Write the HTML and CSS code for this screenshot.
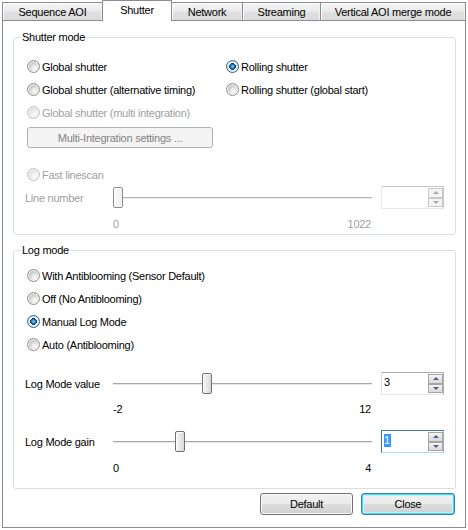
FILE: index.html
```html
<!DOCTYPE html>
<html>
<head>
<meta charset="utf-8">
<link rel="stylesheet" href="styles.css">
</head>
<body>
<div class="tabs">
  <div class="tab t1">Sequence AOI</div>
  <div class="tab sel t2">Shutter</div>
  <div class="tab t3">Network</div>
  <div class="tab t4">Streaming</div>
  <div class="tab t5">Vertical AOI merge mode</div>
</div>
<div class="panel">
  <fieldset class="group g1">
    <legend>Shutter mode</legend>
    <div class="opts">
      <div class="col col-left">
        <div class="opt"><span class="radio"></span>Global shutter</div>
        <div class="opt"><span class="radio"></span>Global shutter (alternative timing)</div>
        <div class="opt disabled"><span class="radio"></span>Global shutter (multi integration)</div>
      </div>
      <div class="col">
        <div class="opt"><span class="radio checked"></span>Rolling shutter</div>
        <div class="opt"><span class="radio"></span>Rolling shutter (global start)</div>
      </div>
    </div>
    <div class="btn-disabled">Multi-Integration settings ...</div>
    <div class="opt disabled linescan"><span class="radio"></span>Fast linescan</div>
    <div class="srow disabled">
      <div class="slabel">Line number</div>
      <div class="slider"><span class="thumb" style="left:0px"></span></div>
      <div class="spin">
        <div class="spin-val"></div>
        <div class="spin-btns"><span class="spin-btn up"></span><span class="spin-btn down"></span></div>
      </div>
    </div>
    <div class="scale disabled s1"><span>0</span><span>1022</span></div>
  </fieldset>

  <fieldset class="group g2">
    <legend>Log mode</legend>
    <div class="opts">
      <div class="col">
        <div class="opt"><span class="radio"></span>With Antiblooming (Sensor Default)</div>
        <div class="opt"><span class="radio"></span>Off (No Antiblooming)</div>
        <div class="opt"><span class="radio checked"></span>Manual Log Mode</div>
        <div class="opt"><span class="radio"></span>Auto (Antiblooming)</div>
      </div>
    </div>
    <div class="srow r1">
      <div class="slabel">Log Mode value</div>
      <div class="slider"><span class="thumb" style="left:89px"></span></div>
      <div class="spin">
        <div class="spin-val">3</div>
        <div class="spin-btns"><span class="spin-btn up"></span><span class="spin-btn down"></span></div>
      </div>
    </div>
    <div class="scale s2"><span>-2</span><span>12</span></div>
    <div class="srow r2">
      <div class="slabel">Log Mode gain</div>
      <div class="slider"><span class="thumb" style="left:62px"></span></div>
      <div class="spin focus">
        <div class="spin-val"><span class="seltext">1</span></div>
        <div class="spin-btns"><span class="spin-btn up"></span><span class="spin-btn down"></span></div>
      </div>
    </div>
    <div class="scale s3"><span>0</span><span>4</span></div>
  </fieldset>

  <div class="actions">
    <div class="pbtn default">Default</div>
    <div class="pbtn close">Close</div>
  </div>
</div>
</body>
</html>
```
FILE: styles.css
```css
html, body {
  margin: 0;
  padding: 0;
}
body {
  width: 468px;
  height: 530px;
  overflow: hidden;
  background: #fff;
  font-family: "Liberation Sans", Arial, sans-serif;
  font-size: 11px;
  letter-spacing: -0.25px;
  color: #000;
}

/* Tabs */
.tabs {
  display: flex;
  align-items: flex-end;
  height: 20px;
  padding-left: 2px;
}
.tab {
  box-sizing: border-box;
  height: 18px;
  margin-left: -1px;
  padding-top: 1px;
  border: 1px solid #898c95;
  border-bottom: none;
  background: linear-gradient(#f4f4f4, #ececec 45%, #e0e0e0 55%, #dadada);
  box-shadow: inset 1px 1px 0 #fcfcfc, inset -1px 0 0 #f0f0f0;
  display: flex;
  align-items: center;
  justify-content: center;
  white-space: nowrap;
}
.tab.t1 { margin-left: 0; width: 101px; }
.tab.t2 { width: 70px; }
.tab.t3 { width: 72px; }
.tab.t4 { width: 79px; }
.tab.t5 { width: 146px; }
.tab.sel {
  height: 21px;
  margin-bottom: -1px;
  padding-top: 0;
  padding-bottom: 2px;
  background: #fff;
  box-shadow: none;
  position: relative;
  z-index: 1;
}

/* Panel */
.panel {
  box-sizing: border-box;
  width: 464px;
  height: 508px;
  margin-left: 2px;
  border: 1px solid #898c95;
  display: flex;
  flex-direction: column;
}

/* Group boxes */
.group {
  margin: 10px 9px 0 10px;
  padding: 0 0 2px 11px;
  border: 1px solid #d5dfe5;
  border-radius: 3px;
  min-width: 0;
}
.group legend {
  margin-left: -5px;
  padding: 0 2px;
  line-height: 13px;
}
.g1 { margin-top: 10px; padding-bottom: 2px; }
.g2 { margin-top: 9px; padding-bottom: 12px; }

.opts {
  display: flex;
  margin-left: 2px;
}
.g1 .opts { margin-top: 11px; }
.g2 .opts { margin-top: 7px; }
.col-left { width: 199px; }

.opt {
  display: flex;
  align-items: center;
  height: 23px;
  white-space: nowrap;
}
.radio {
  box-sizing: border-box;
  width: 13px;
  height: 13px;
  margin-right: 2px;
  flex: none;
  border-radius: 50%;
  border: 1px solid #8e8f8f;
  background: radial-gradient(circle at 62% 66%, #fbfbfb 0, #ebebeb 2.5px, #cfcfcf 5px, #c8c8c8 5.5px);
  box-shadow: inset 0 0 0 1px #f6f6f6;
}
.radio.checked {
  border-color: #2c628b;
  background: radial-gradient(circle at 50% 50%, #9be0fb 0, #3e9ad9 1.2px, #1b5b96 2.6px, #0f3a67 3.4px, #eef3f6 3.6px, #dfe6ea 5.5px);
  box-shadow: none;
}
.disabled { color: #a0a0a0; }
.disabled .radio {
  border-color: #c0c1c3;
  background: radial-gradient(circle at 62% 66%, #fbfbfb 0, #f1f1f1 3px, #e2e2e2 5.5px);
}

.btn-disabled {
  box-sizing: border-box;
  width: 186px;
  height: 21px;
  margin: 3px 0 0 2px;
  border: 1px solid #adb2b5;
  border-radius: 3px;
  background: #f4f4f4;
  color: #838383;
  display: flex;
  align-items: center;
  justify-content: center;
}
.linescan { margin: 15px 0 0 2px; }

/* Slider rows */
.srow {
  display: flex;
  align-items: center;
  height: 23px;
}
.g2 .srow.r1 { margin-top: 16px; }
.g2 .srow.r2 { margin-top: 13px; }
.slabel {
  width: 88px;
  white-space: nowrap;
}
.slider {
  position: relative;
  width: 259px;
  height: 23px;
  background: linear-gradient(#a9a9a9 0 1px, #e4e7e8 1px 2px) no-repeat 0 11px / 100% 2px;
}
.thumb {
  position: absolute;
  top: 1px;
  box-sizing: border-box;
  width: 10px;
  height: 21px;
  border: 1px solid #707070;
  border-radius: 2px;
  background: linear-gradient(90deg, #f6f6f6, #e6e6e6 60%, #d8d8d8);
  box-shadow: inset 1px 1px 0 #fff;
}
.srow.disabled .thumb {
  border-color: #8e8e8e;
  background: linear-gradient(90deg, #fafafa, #efefef);
}
.srow.disabled .slider {
  background: linear-gradient(#b4b4b4 0 1px, #e8ebec 1px 2px) no-repeat 0 11px / 100% 2px;
}

.spin {
  box-sizing: border-box;
  width: 63px;
  height: 23px;
  margin-left: 9px;
  padding: 1px 0 1px 1px;
  border: 1px solid;
  border-color: #abadb3 #abadb3 #e3e9ef #e2e3ea;
  background: #fff;
  display: flex;
}
.spin-val {
  flex: 1;
  padding: 1px 0 0 1px;
  line-height: 14px;
}
.spin-btns {
  width: 15px;
  display: flex;
  flex-direction: column;
}
.spin-btn {
  box-sizing: border-box;
  flex: 1;
  border: 1px solid #a5a5a5;
  background: linear-gradient(#f5f5f5, #e6e6e6 50%, #d9d9d9);
  display: flex;
  align-items: center;
  justify-content: center;
}
.spin-btn::after {
  content: "";
  width: 0;
  height: 0;
  border-left: 3px solid transparent;
  border-right: 3px solid transparent;
}
.spin-btn.up::after { border-bottom: 3px solid #4d5e8f; }
.spin-btn.down::after { border-top: 3px solid #4d5e8f; }
.srow.disabled .spin { border-color: #c4c6ca #c4c6ca #e6e8ea #e6e8ea; }
.srow.disabled .spin-btn {
  border-color: #c9c9c9;
  background: #f4f4f4;
}
.srow.disabled .spin-btn.up::after { border-bottom-color: #a8a8a8; }
.srow.disabled .spin-btn.down::after { border-top-color: #a8a8a8; }
.spin.focus { border-color: #3d7bad #abadb3 #b7d9ed #3d7bad; }
.seltext {
  background: #3399ff;
  color: #fff;
  padding: 0 1px 1px 0;
}

.scale {
  display: flex;
  justify-content: space-between;
  width: 258px;
  height: 16px;
  margin-left: 88px;
  align-items: center;
}
.s1 { margin-top: 7px; }
.s2 { margin-top: 6px; }
.s3 { margin-top: 7px; }

/* Bottom buttons */
.actions {
  display: flex;
  justify-content: flex-end;
  gap: 8px;
  margin: 4px 10px 0 0;
}
.pbtn {
  box-sizing: border-box;
  height: 22px;
  border: 1px solid #707070;
  border-radius: 3px;
  background: linear-gradient(#f2f2f2, #ebebeb 48%, #dddddd 52%, #cfcfcf);
  box-shadow: inset 0 0 0 1px #fbfbfb;
  display: flex;
  align-items: center;
  justify-content: center;
}
.pbtn.default { width: 93px; }
.pbtn.close {
  width: 94px;
  border-color: #3c7fb1;
  box-shadow: inset 0 0 0 1px #48d8fb, inset 0 0 0 2px #c7eefc;
}
```
